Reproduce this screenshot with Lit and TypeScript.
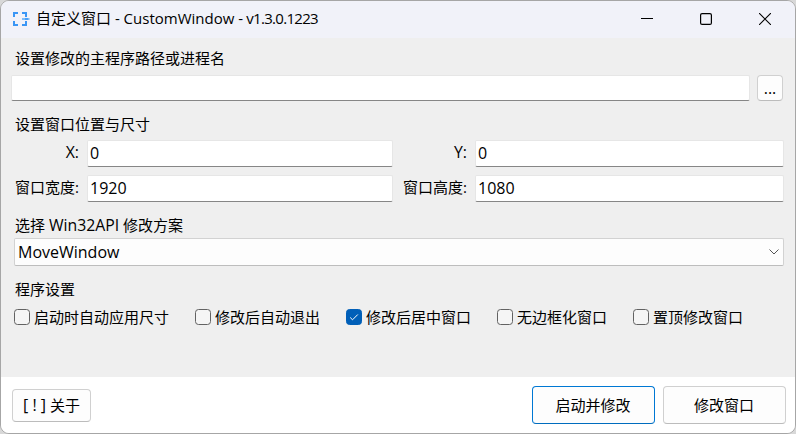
import { LitElement, html, css } from "lit";
import { customElement } from "lit/decorators.js";

const options = [
  { label: "启动时自动应用尺寸", checked: false },
  { label: "修改后自动退出", checked: false },
  { label: "修改后居中窗口", checked: true },
  { label: "无边框化窗口", checked: false },
  { label: "置顶修改窗口", checked: false },
];

@customElement("app-root")
export class AppRoot extends LitElement {
  static styles = css`
    :host { display: block; width: 796px; height: 434px; background: #d8d8d8; }
    * { box-sizing: border-box; }
    svg { display: block; flex: none; }
    .window {
      width: 796px; height: 434px; border: 1px solid #a6a6a6; border-radius: 9px;
      overflow: hidden; display: flex; flex-direction: column; background: #efefef; color: #000;
      font: 400 15px/20px "Open Sans", "Noto Sans CJK SC", sans-serif;
      white-space: nowrap;
    }
    .bar { height: 37px; background: #f1f2f9; display: flex; align-items: center; padding: 0 1px 2px 11px; flex: none; }
    .title { flex: 1; margin: -1px 0 0 6px; }
    .version { letter-spacing: -0.7px; }
    .latin { font-size: 15.8px; }
    .controls { display: flex; gap: 47px; padding-right: 23px; }
    .body { flex: 1; padding: 10px 11px 0; display: flex; flex-direction: column; }
    .heading { height: 20px; padding-left: 3px; }
    .path { display: flex; margin: 7px 1px 0 -1px; gap: 7px; height: 26px; }
    .field {
      height: 27px; flex: 1; background: #fff; border: 1px solid #e6e6e6; border-bottom-color: #868686;
      border-radius: 2px; padding: 2px 2px 0; min-width: 0; font-size: 16px;
    }
    .path .field { height: 26px; }
    .more, .btn {
      background: #fdfdfd; border: 1px solid #d0d0d0; border-bottom-color: #bcbcbc;
      border-radius: 4px; text-align: center;
    }
    .more { width: 26px; height: 26px; line-height: 25px; font-size: 16px; }
    .size { margin-top: 13px; }
    .grid { display: grid; grid-template-columns: 67px 306px 66px 309px; column-gap: 8px; row-gap: 8px; margin-top: 6px; }
    .grid .name { text-align: right; padding-top: 2px; }
    .api { margin-top: 13px; }
    .select {
      margin: 3px 0 0 2px; height: 28px; width: 770px; background: #fdfdfd; border: 1px solid #d2d2d2;
      border-bottom-color: #bdbdbd; border-radius: 2px; padding: 0 4px 0 3px; font-size: 16px;
      display: flex; align-items: center; justify-content: space-between;
    }
    .settings { margin-top: 13px; }
    .options { display: flex; gap: 26px; padding-left: 2px; margin-top: 8px; }
    .option { display: flex; align-items: center; gap: 4px; height: 20px; }
    .box { width: 16px; height: 16px; border: 1px solid #626262; border-radius: 3.5px; background: #f5f5f5; flex: none; }
    .box.on { background: #005fb8; border-color: #005fb8; }
    .footer { height: 56px; flex: none; background: #fff; display: flex; align-items: center; padding: 0 9px 0 11px; gap: 8px; }
    .btn { width: 123px; height: 38px; line-height: 36px; padding-right: 1px; }
    .primary { border-color: #0078d4; border-bottom-color: #006cbe; }
    .about { width: 79px; height: 33px; line-height: 30px; margin-right: auto; padding: 0; }
    .mark { font-size: 16px; }
  `;

  render() {
    return html`
      <div class="window">
        <div class="bar">
          <svg width="18" height="16" viewBox="0 0 18 16" fill="none" stroke="#3a96f5" stroke-width="2">
            <path d="M6 2H2V6M2 10V14H6M10 2H14V6M10 14H14V10" />
            <path d="M10 8H17.500" stroke="#7dbcf9" />
            <path d="M13 8H16" stroke-width="1.500" />
          </svg>
          <div class="title">自定义窗口 - CustomWindow -<span class="version"> v1.3.0.1223</span></div>
          <div class="controls">
            <svg width="12" height="12" viewBox="0 0 12 12" stroke="#000"><path d="M0 5.5H12" /></svg>
            <svg width="12" height="12" viewBox="0 0 12 12" stroke="#000" stroke-width="1.2" fill="none"><rect x=".6" y=".6" width="10.8" height="10.8" rx="1.5" /></svg>
            <svg width="12" height="12" viewBox="0 0 12 12" stroke="#000" stroke-width="1.1"><path d="M0 0L12 12M12 0L0 12" /></svg>
          </div>
        </div>
        <div class="body">
          <div class="heading">设置修改的主程序路径或进程名</div>
          <div class="path"><div class="field"></div><div class="more">...</div></div>
          <div class="heading size">设置窗口位置与尺寸</div>
          <div class="grid">
            <div class="name"><span class="latin">X:</span></div><div class="field">0</div>
            <div class="name"><span class="latin">Y:</span></div><div class="field">0</div>
            <div class="name">窗口宽度:</div><div class="field">1920</div>
            <div class="name">窗口高度:</div><div class="field">1080</div>
          </div>
          <div class="heading api">选择 <span class="latin">Win32API</span> 修改方案</div>
          <div class="select">
            <span>MoveWindow</span>
            <svg width="10" height="6" viewBox="0 0 10 6" fill="none" stroke="#555"><path d="M.5 .5L5 5L9.500 .5" /></svg>
          </div>
          <div class="heading settings">程序设置</div>
          <div class="options">
            ${options.map(
              (o) => html`<div class="option">
                <div class="box ${o.checked ? "on" : ""}">
                  ${o.checked
                    ? html`<svg width="14" height="14" viewBox="0 0 14 14" fill="none" stroke="#fff"><path d="M3.200 7.500L5.500 9.800L10.800 4.500" /></svg>`
                    : ""}
                </div>
                <span>${o.label}</span>
              </div>`
            )}
          </div>
        </div>
        <div class="footer">
          <div class="btn about"><span class="mark">[ ! ]</span> 关于</div>
          <div class="btn primary">启动并修改</div>
          <div class="btn">修改窗口</div>
        </div>
      </div>
    `;
  }
}
